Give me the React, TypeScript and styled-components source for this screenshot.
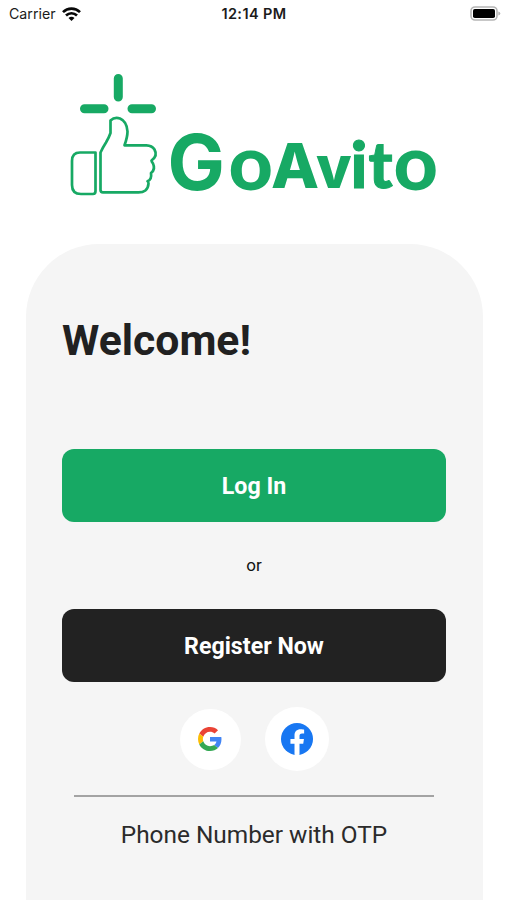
import React from "react";
import styled, { createGlobalStyle } from "styled-components";

const GREEN = "#17a964";

const GlobalStyle = createGlobalStyle`
  *, *::before, *::after { box-sizing: border-box; }
  body { margin: 0; background: #fff; }
`;

const Screen = styled.main`
  width: 507px;
  height: 900px;
  overflow: hidden;
  display: flex;
  flex-direction: column;
  background: #fff;
  font-family: Roboto, "Noto Sans", sans-serif;
`;

const StatusBar = styled.header`
  height: 28px;
  flex: none;
  display: grid;
  grid-template-columns: 1fr auto 1fr;
  align-items: center;
  padding: 0 6px 0 9px;
  font-family: Inter, sans-serif;
  color: #1b1b1b;
`;

const Carrier = styled.div`
  display: flex;
  align-items: center;
  gap: 6px;
  font-size: 14.2px;
  line-height: 28px;
`;

const Clock = styled.time`
  font-size: 14.5px;
  line-height: 28px;
  letter-spacing: 0.4px;
  font-weight: 600;
  margin-right: 2px;
`;

const Battery = styled.svg`
  justify-self: end;
  margin-bottom: 2px;
`;

const LogoArea = styled.div`
  height: 216px;
  flex: none;
`;

const LogoSvg = styled.svg`
  display: block;
`;

const Wordmark = styled.text`
  font-family: Lato, sans-serif;
  font-weight: 900;
  fill: ${GREEN};
`;

const Geometric = styled.tspan<{ $weight?: number }>`
  font-family: Inter, sans-serif;
  font-weight: ${(p) => p.$weight ?? 800};
`;

const Card = styled.section`
  width: 457px;
  flex: 1;
  margin-left: 25.5px;
  padding: 71px 36.5px 0;
  border-radius: 73px 73px 0 0;
  background: #f5f5f5;
  display: flex;
  flex-direction: column;
  align-items: center;
`;

const Title = styled.h1`
  align-self: flex-start;
  margin: 0 0 83px;
  font-size: 42.7px;
  line-height: 51px;
  font-weight: 700;
  color: #212121;
`;

const Button = styled.button<{ $color: string }>`
  width: 384px;
  height: 73px;
  flex: none;
  border: 0;
  border-radius: 12px;
  padding: 1px 0 0;
  background: ${(p) => p.$color};
  color: #fff;
  font: 700 23.2px/72px Roboto, sans-serif;
`;

const Or = styled.div`
  height: 87px;
  line-height: 87px;
  font-size: 17px;
  color: #111;
`;

const Socials = styled.div`
  display: flex;
  align-items: center;
  gap: 24px;
  margin-top: 25px;
  height: 64px;
`;

const Social = styled.button<{ $size: number }>`
  width: ${(p) => p.$size}px;
  height: ${(p) => p.$size}px;
  border: 0;
  border-radius: 50%;
  padding: 0;
  background: #fff;
  display: grid;
  place-items: center;
`;

const Divider = styled.hr`
  width: 360px;
  height: 2px;
  border: 0;
  margin: 24px 0 0;
  background: #a3a3a3;
`;

const Otp = styled.a`
  margin-top: 23px;
  font-size: 24.4px;
  line-height: 30px;
  color: #2b2b2b;
`;

function Logo() {
  return (
    <LogoSvg width="507" height="216" viewBox="0 28 507 216" role="img" aria-label="GoAvito">
      <g fill="none" stroke={GREEN} strokeLinecap="round">
        <path d="M118.3 78.5v18.5M84.5 108.8h19.5M132 108.8h19.5" strokeWidth="9" />
        <g strokeWidth="2.7" strokeLinejoin="round">
          <path d="M95.5 152.5H80Q72 152.5 72 161V185Q72 194 81 194H93Q95.5 194 95.5 191Z" />
          <path d="M100.5 152.5V190Q100.5 192.3 103 192.3H137Q148 193 148.5 183.5Q148.5 181.5 147.5 181.3Q152 179.500 151 173Q155.800 169.500 153 163.500Q151.500 161.500 151.500 160.500Q158 156 154.500 149.500Q152 145.500 146.500 145.300H124.500Q127.500 137 127.500 131.500Q127 121.500 120 118.500Q114.500 116.700 110.500 120.500V133Q109 137.500 106 142.500Q102.800 147.500 100.500 152.500Z" />
        </g>
      </g>
      <Wordmark y="188">
        <Geometric $weight={700} x="167.500" y="190" fontSize="76.500">G</Geometric>
        <tspan x="228.500" y="189.500" fontSize="77">o</tspan>
        <Geometric x="271" y="188" fontSize="62.500">A</Geometric>
        <Geometric x="316" fontSize="58">v</Geometric>
        <tspan x="350.500" fontSize="65" stroke={GREEN} strokeWidth="1">i</tspan>
        <tspan x="368.500" fontSize="64" stroke={GREEN} strokeWidth="1">t</tspan>
        <tspan x="393.500" y="189.500" fontSize="77">o</tspan>
      </Wordmark>
    </LogoSvg>
  );
}

function WifiIcon() {
  return (
    <svg width="19" height="15" viewBox="0 0 19 15">
      <g fill="none" stroke="#080808" strokeWidth="2.7">
        <path d="M1 5.100C5.700.500 13.300.500 18 5.100" />
        <path d="M4 8.500c3.200-3 7.800-3 11 0" />
      </g>
      <path d="M6.500 10.900c1.700-1.600 4.300-1.600 6 0l-3 3Z" fill="#080808" />
    </svg>
  );
}

function BatteryIcon() {
  return (
    <Battery width="31" height="15" viewBox="0 0 31 15">
      <rect x="1" y="1" width="26" height="13" rx="4" fill="#fff" stroke="#b5b5b5" strokeWidth="1.600" />
      <rect x="3" y="3" width="22" height="9" rx="1.800" fill="#000" />
      <path d="M28.300 5.500q2 .4 2 2t-2 2Z" fill="#b5b5b5" />
    </Battery>
  );
}

function GoogleIcon() {
  return (
    <svg width="24" height="24" viewBox="0 0 48 48">
      <path fill="#ea4335" d="M24 9.500c3.540 0 6.710 1.220 9.210 3.600l6.850-6.850C35.900 2.380 30.470 0 24 0 14.620 0 6.510 5.380 2.560 13.220l7.980 6.190C12.430 13.720 17.740 9.500 24 9.500z" />
      <path fill="#4285f4" d="M46.980 24.550c0-1.570-.15-3.090-.38-4.550H24v9.020h12.940c-.58 2.960-2.260 5.480-4.780 7.180l7.730 6c4.510-4.180 7.090-10.360 7.090-17.650z" />
      <path fill="#fbbc05" d="M10.530 28.590c-.48-1.450-.76-2.990-.76-4.590s.27-3.140.76-4.590l-7.980-6.190C.92 16.460 0 20.120 0 24c0 3.880.92 7.540 2.560 10.780l7.970-6.190z" />
      <path fill="#34a853" d="M24 48c6.480 0 11.930-2.130 15.890-5.810l-7.730-6c-2.150 1.450-4.920 2.300-8.160 2.300-6.260 0-11.570-4.220-13.470-9.910l-7.980 6.190C6.510 42.620 14.620 48 24 48z" />
    </svg>
  );
}

function FacebookIcon() {
  return (
    <svg width="32" height="32" viewBox="0 0 24 24">
      <circle cx="12" cy="12" r="12" fill="#1877f2" />
      <path fill="#fff" d="M10.130 23.900V15.560H7.080v-3.490h3.050V9.430c0-3.020 1.790-4.690 4.530-4.690 1.310 0 2.690.24 2.690.24v2.970h-1.510c-1.500 0-1.960.93-1.960 1.890v2.230h3.330l-.53 3.490h-2.800v8.340a12 12 0 0 1-3.750 0z" />
    </svg>
  );
}

export default function App() {
  return (
    <>
      <GlobalStyle />
      <Screen>
        <StatusBar>
          <Carrier>Carrier <WifiIcon /></Carrier>
          <Clock>12:14 PM</Clock>
          <BatteryIcon />
        </StatusBar>
        <LogoArea><Logo /></LogoArea>
        <Card>
          <Title>Welcome!</Title>
          <Button $color={GREEN}>Log In</Button>
          <Or>or</Or>
          <Button $color="#222222">Register Now</Button>
          <Socials>
            <Social $size={61} aria-label="Continue with Google"><GoogleIcon /></Social>
            <Social $size={64} aria-label="Continue with Facebook"><FacebookIcon /></Social>
          </Socials>
          <Divider />
          <Otp>Phone Number with OTP</Otp>
        </Card>
      </Screen>
    </>
  );
}
